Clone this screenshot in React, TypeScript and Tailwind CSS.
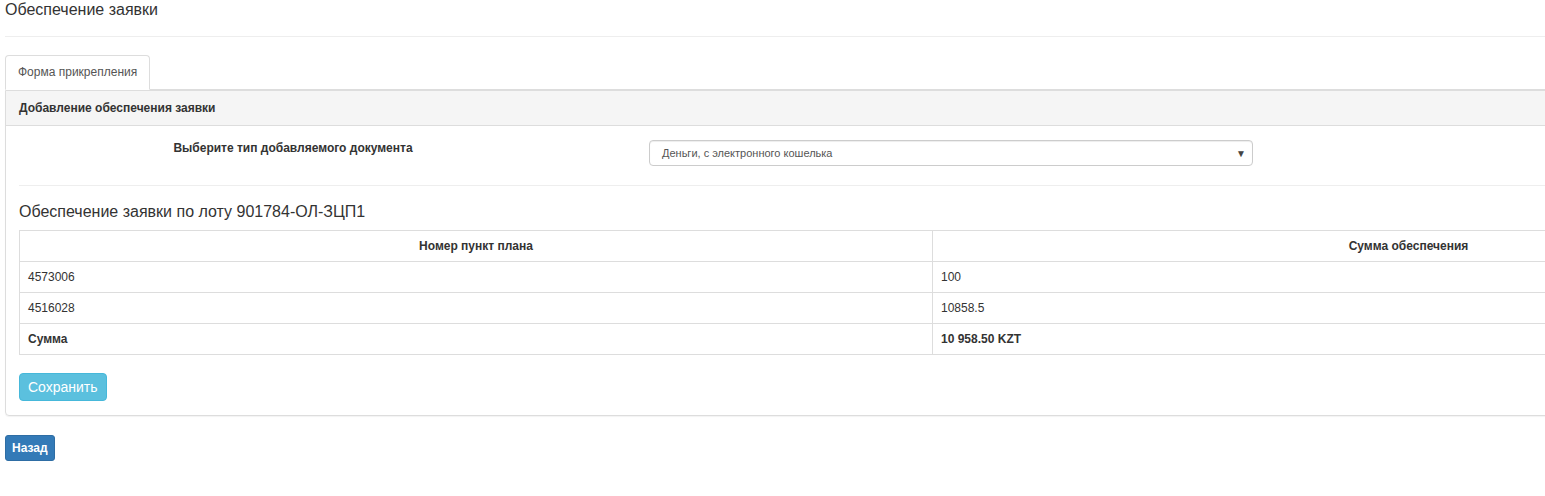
const rows = [
  { num: '4573006', sum: '100' },
  { num: '4516028', sum: '10858.5' },
];

export default function App() {
  return (
    <div className="w-full min-h-[496px] overflow-hidden bg-white text-[#333] font-['Liberation_Sans',Arial,sans-serif]">
      <div className="w-[1900px] pl-[5px]">
        <h3 className="text-[16px] leading-[20px] font-normal">Обеспечение заявки</h3>
        <div className="mt-[16px] border-t border-[#eee]" />

        <div className="mt-[18px] flex border-b border-[#ddd]">
          <div className="-mb-px border border-[#ddd] border-b-transparent bg-white rounded-t-[4px] px-[12px] py-[8px] text-[12px] leading-[17px] text-[#555]">
            Форма прикрепления
          </div>
        </div>

        <div className="border border-[#ddd] rounded-b-[4px] shadow-[0_1px_1px_rgba(0,0,0,0.05)]">
          <div className="bg-[#f5f5f5] border-b border-[#ddd] px-[13px] py-[9px] text-[12px] leading-[16px] font-bold">
            Добавление обеспечения заявки
          </div>

          <div className="px-[13px] pt-[14px] pb-[14px]">
            <div className="flex items-start">
              <div className="w-[548px] text-center text-[12px] leading-[17px] font-bold">
                Выберите тип добавляемого документа
              </div>
              <div className="ml-[82px] w-[604px] h-[26px] flex items-center justify-between border border-[#ccc] rounded-[4px] shadow-[inset_0_1px_1px_rgba(0,0,0,0.075)] pl-[12px] pr-[6px] text-[11px] text-[#555]">
                <span>Деньги, с электронного кошелька</span>
                <span className="text-[10px] text-[#444]">▼</span>
              </div>
            </div>

            <div className="mt-[19px] border-t border-[#eee]" />

            <h4 className="mt-[16px] text-[16px] leading-[20px] font-normal">
              Обеспечение заявки по лоту 901784-ОЛ-ЗЦП1
            </h4>

            <table className="mt-[8px] border-collapse text-[12px] leading-[16px]">
              <thead>
                <tr>
                  <th className="w-[913px] border border-[#ddd] px-[8px] py-[7px] font-bold text-center">Номер пункт плана</th>
                  <th className="w-[952px] border border-[#ddd] px-[8px] py-[7px] font-bold text-center">Сумма обеспечения</th>
                </tr>
              </thead>
              <tbody>
                {rows.map((r) => (
                  <tr key={r.num}>
                    <td className="border border-[#ddd] px-[8px] py-[7px]">{r.num}</td>
                    <td className="border border-[#ddd] px-[8px] py-[7px]">{r.sum}</td>
                  </tr>
                ))}
                <tr>
                  <td className="border border-[#ddd] px-[8px] py-[7px] font-bold">Сумма</td>
                  <td className="border border-[#ddd] px-[8px] py-[7px] font-bold">10 958.50 KZT</td>
                </tr>
              </tbody>
            </table>

            <button className="mt-[18px] h-[28px] px-[8px] rounded-[4px] border border-[#46b8da] bg-[#5bc0de] text-white text-[14px] leading-[20px]">
              Сохранить
            </button>
          </div>
        </div>

        <button className="mt-[19px] h-[26px] px-[6px] rounded-[3px] border border-[#2e6da4] bg-[#337ab7] text-white text-[12px] leading-[16px] font-bold">
          Назад
        </button>
      </div>
    </div>
  );
}
